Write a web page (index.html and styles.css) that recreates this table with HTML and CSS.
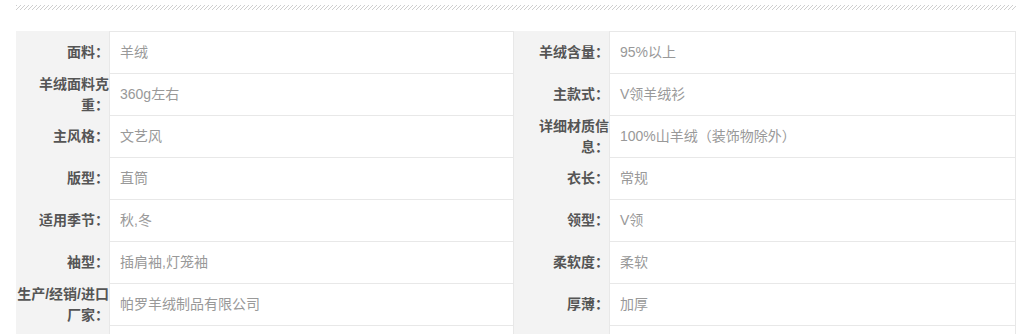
FILE: index.html
```html
<!DOCTYPE html>
<html lang="zh-CN">
<head>
<meta charset="utf-8">
<title>产品参数</title>
<link rel="stylesheet" href="styles.css">
</head>
<body>
<div class="wrap">
  <div class="hatch"></div>
  <div class="spec">
    <div class="k">面料：</div><div class="v">羊绒</div>
    <div class="k k2">羊绒含量：</div><div class="v v2">95%以上</div>

    <div class="k">羊绒面料克重：</div><div class="v">360g左右</div>
    <div class="k k2">主款式：</div><div class="v v2">V领羊绒衫</div>

    <div class="k">主风格：</div><div class="v">文艺风</div>
    <div class="k k2">详细材质信息：</div><div class="v v2">100%山羊绒（装饰物除外）</div>

    <div class="k">版型：</div><div class="v">直筒</div>
    <div class="k k2">衣长：</div><div class="v v2">常规</div>

    <div class="k">适用季节：</div><div class="v">秋,冬</div>
    <div class="k k2">领型：</div><div class="v v2">V领</div>

    <div class="k">袖型：</div><div class="v">插肩袖,灯笼袖</div>
    <div class="k k2">柔软度：</div><div class="v v2">柔软</div>

    <div class="k">生产/经销/进口厂家：</div><div class="v">帕罗羊绒制品有限公司</div>
    <div class="k k2">厚薄：</div><div class="v v2">加厚</div>

    <div class="k"></div><div class="v"></div>
    <div class="k k2"></div><div class="v v2"></div>
  </div>
</div>
</body>
</html>
```

FILE: styles.css
```css
html, body {
  margin: 0;
  padding: 0;
  background: #ffffff;
}

.wrap {
  padding: 5px 0 0 16px;
  width: 1000px;
  font-family: "Liberation Sans", "Noto Sans CJK SC", sans-serif;
  font-size: 14px;
}

.hatch {
  height: 5px;
  margin-bottom: 21px;
  background: repeating-linear-gradient(135deg, #cfcfcf 0 1px, #ffffff 1px 2.83px);
}

.spec {
  display: grid;
  grid-template-columns: 93px 405px 95px 407px;
  grid-auto-rows: 42px;
}

.k {
  box-sizing: border-box;
  background: #f3f3f3;
  color: #555555;
  font-weight: bold;
  line-height: 21px;
  text-align: right;
  display: flex;
  align-items: center;
  justify-content: flex-end;
  padding-top: 1px;
}

.v {
  box-sizing: border-box;
  border-top: 1px solid #e8e8e8;
  border-left: 1px solid #e8e8e8;
  border-right: 1px solid #e8e8e8;
  color: #999999;
  line-height: 21px;
  padding-left: 10px;
  display: flex;
  align-items: center;
}

.v2 {
  border-right: 1px solid #e8e8e8;
}

.k2 {
  margin-left: 0;
}
```
